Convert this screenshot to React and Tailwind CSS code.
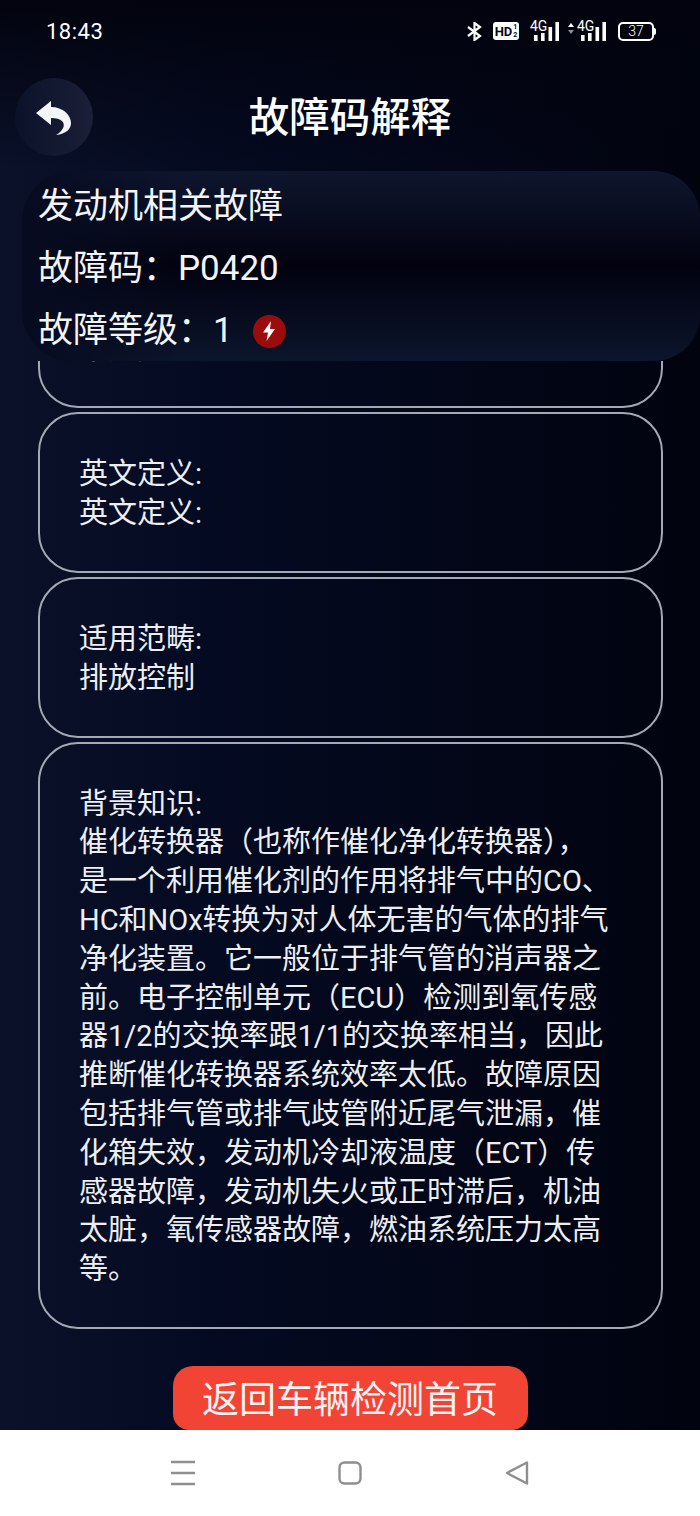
const FONT = "font-['Roboto','Noto_Sans_CJK_SC',sans-serif]";

function Bars() {
  return (
    <svg width="25" height="19" viewBox="0 0 25 19" fill="#fff">
      <rect x="0" y="13" width="3.6" height="6" />
      <rect x="7" y="11" width="3.6" height="8" />
      <rect x="14.5" y="5" width="3.6" height="14" />
      <rect x="21.4" y="0" width="3.6" height="19" />
    </svg>
  );
}

function Signal({ arrows }) {
  return (
    <div className="relative w-[29px] h-[19px] flex items-end justify-end">
      <span className="absolute left-0 top-[-3px] text-[14px] leading-[15px] text-white font-['Roboto',sans-serif]">
        4G
      </span>
      {arrows && (
        <svg className="absolute left-[-9px] top-[1px]" width="6" height="11" viewBox="0 0 6 11" fill="#8b8f99">
          <path d="M3 0 6 4H0Z" fill="#fff" />
          <path d="M3 11 0 7H6Z" />
        </svg>
      )}
      <Bars />
    </div>
  );
}

function StatusBar() {
  return (
    <div className="h-[62px] shrink-0 flex items-center justify-between pl-[46px] pr-[44px] text-white">
      <span className="text-[22px] font-['Roboto',sans-serif] tracking-[0.5px]">18:43</span>
      <div className="flex items-center">
        <svg width="15" height="19" viewBox="0 0 15 19" fill="none" stroke="#fff" strokeWidth="2.2">
          <path d="M1 5 13 14 7.5 18V1L13 5 1 14" />
        </svg>
        <div className="ml-[11px] w-[26px] h-[18px] bg-white rounded-[3px] flex items-center justify-center gap-[1px] text-[#05081a] font-['Roboto',sans-serif] font-bold">
          <span className="text-[13px] leading-none">HD</span>
          <span className="flex flex-col text-[7px] leading-[8px]">
            <span>1</span>
            <span>2</span>
          </span>
        </div>
        <div className="ml-[11px]">
          <Signal />
        </div>
        <div className="ml-[18px]">
          <Signal arrows />
        </div>
        <div className="ml-[12px] flex items-center">
          <div className="w-[36px] h-[19px] rounded-[5px] border-2 border-white flex items-center justify-center text-[14px] leading-none font-['Roboto',sans-serif] font-light">
            37
          </div>
          <div className="w-[2px] h-[7px] bg-white rounded-r-sm" />
        </div>
      </div>
    </div>
  );
}

function Header() {
  return (
    <div className="h-[109px] shrink-0 grid grid-cols-[1fr_auto_1fr] items-center">
      <button className="ml-[15px] w-[78px] h-[78px] rounded-full bg-gradient-to-r from-[#0a1229] to-[#1b1f38] flex items-center justify-center">
        <svg width="36" height="37" viewBox="0 0 36 37" fill="#f4f5f7">
          <path d="M0 15 15 3V9C27 9 35 17 35 25 35 31 30 36 20 37 27 33 30 27 26 23 24 21 20 20 15 20V27Z" />
        </svg>
      </button>
      <h1 className="pt-[3px] text-[40.5px] leading-none font-medium text-white">故障码解释</h1>
      <div />
    </div>
  );
}

function InfoPanel() {
  return (
    <div className="h-[190px] shrink-0 ml-[22px] pl-[16px] pt-[5px] rounded-l-[50px] rounded-r-[46px] bg-[linear-gradient(to_right,#060b20,transparent_160px),linear-gradient(to_bottom,#0e162e,#02020f_50%,#0b152c)] text-[35px] leading-[62px] text-[#f3f4f6]">
      <div>发动机相关故障</div>
      <div>故障码：P0420</div>
      <div className="flex items-center">
        <span>故障等级：1</span>
        <span className="ml-[20px] w-[33px] h-[33px] rounded-full bg-[#9b0c0c] flex items-center justify-center">
          <svg width="14" height="20" viewBox="0 0 14 20" fill="#fff">
            <path d="M9 0 1 11.5H6L4.5 20 13 8H8Z" />
          </svg>
        </span>
      </div>
    </div>
  );
}

function Card({ title, children }) {
  return (
    <div className="shrink-0 rounded-[40px] border-2 border-[#a5a9b4] pl-[39px] pr-[49px] pt-[41px] pb-[38px] text-[29px] leading-[38.8px] text-[#eceef2]">
      <div>{title}</div>
      <div>{children}</div>
    </div>
  );
}

function NavBar() {
  return (
    <div className="h-[86px] shrink-0 bg-white flex items-center justify-center gap-[139px]">
      <svg width="28" height="28" viewBox="0 0 28 28" stroke="#8f8f8f" strokeWidth="2.4">
        <path d="M2 3H26M2 14H26M2 25H26" />
      </svg>
      <svg width="28" height="28" viewBox="0 0 28 28" fill="none" stroke="#8f8f8f" strokeWidth="2.4">
        <rect x="3.5" y="3.5" width="21" height="21" rx="5" />
      </svg>
      <svg width="28" height="28" viewBox="0 0 28 28" fill="none" stroke="#8f8f8f" strokeWidth="2.4" strokeLinejoin="round">
        <path d="M24 3.5V24.5L4 14Z" />
      </svg>
    </div>
  );
}

export default function App() {
  return (
    <div className={`w-[700px] h-[1516px] flex flex-col overflow-hidden ${FONT}`}>
      <div className="flex-1 min-h-0 flex flex-col bg-[linear-gradient(to_bottom,#02030e,transparent_170px),linear-gradient(to_right,#0a1129,#040a21_30%,#01030f)]">
        <StatusBar />
        <Header />
        <InfoPanel />

        {/* Scrolled list, its top is cut off by the panel */}
        <div className="flex-1 min-h-0 overflow-hidden flex flex-col justify-end">
          <div className="ml-[38px] mr-[37px] flex flex-col gap-[4px]">
            <Card title="中文定义:">中文定义:</Card>
            <Card title="英文定义:">英文定义:</Card>
            <Card title="适用范畴:">排放控制</Card>
            <Card title="背景知识:">
              催化转换器（也称作催化净化转换器），是一个利用催化剂的作用将排气中的CO、HC和NOx转换为对人体无害的气体的排气净化装置。它一般位于排气管的消声器之前。电子控制单元（ECU）检测到氧传感器1/2的交换率跟1/1的交换率相当，因此推断催化转换器系统效率太低。故障原因包括排气管或排气歧管附近尾气泄漏，催化箱失效，发动机冷却液温度（ECT）传感器故障，发动机失火或正时滞后，机油太脏，氧传感器故障，燃油系统压力太高等。
            </Card>
          </div>
          <div className="shrink-0 mt-[37px] flex justify-center">
            <button className="w-[355px] h-[64px] pt-[4px] rounded-t-[20px] rounded-b-[16px] bg-[#f24435] text-[37px] leading-none text-[#fdf3f2]">
              返回车辆检测首页
            </button>
          </div>
        </div>
      </div>
      <NavBar />
    </div>
  );
}
